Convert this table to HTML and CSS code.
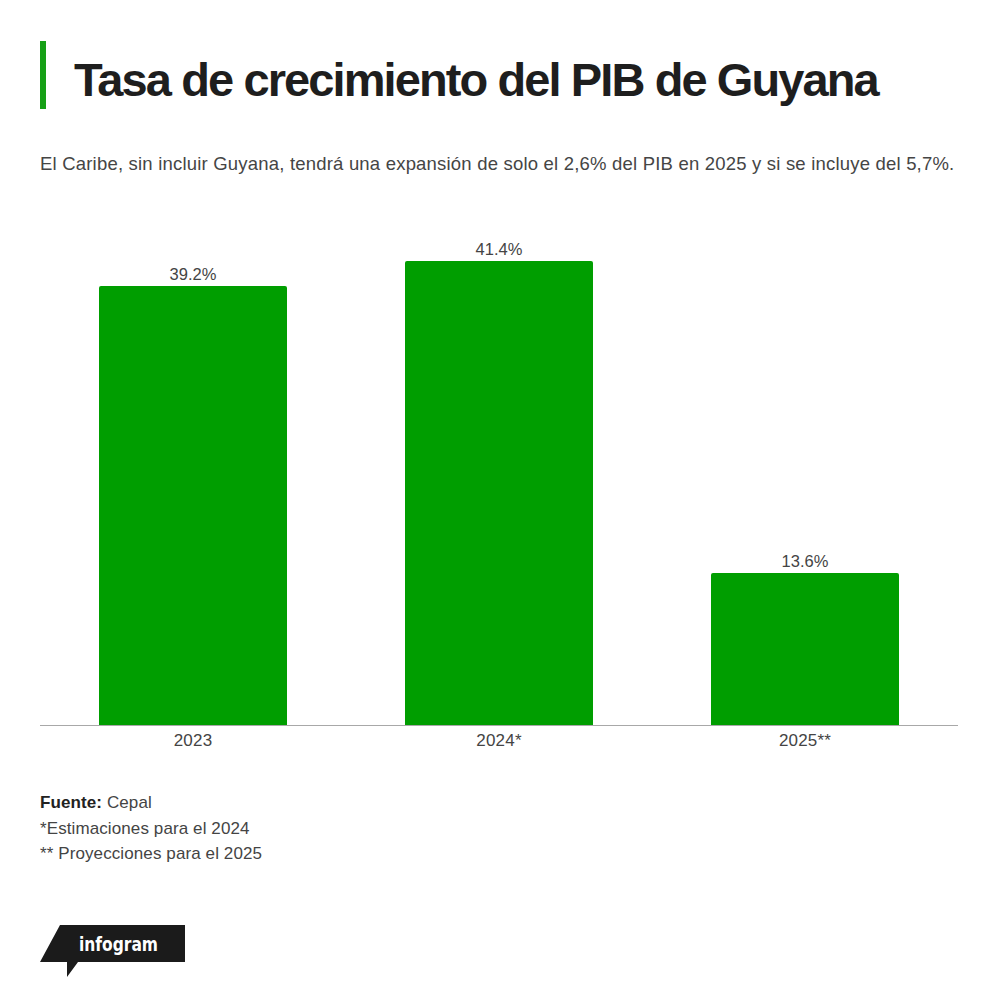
FILE: index.html
```html
<!DOCTYPE html>
<html lang="es">
<head>
<meta charset="utf-8">
<title>Tasa de crecimiento del PIB de Guyana</title>
<link rel="stylesheet" href="styles.css">
</head>
<body>
<div class="page">
  <header class="header">
    <div class="accent"></div>
    <h1 class="title">Tasa de crecimiento del PIB de Guyana</h1>
  </header>
  <p class="subtitle">El Caribe, sin incluir Guyana, tendrá una expansión de solo el 2,6% del PIB en 2025 y si se incluye del 5,7%.</p>

  <div class="chart">
    <div class="plot">
      <div class="col">
        <div class="value">39.2%</div>
        <div class="bar" style="height:439px"></div>
      </div>
      <div class="col">
        <div class="value">41.4%</div>
        <div class="bar" style="height:464px"></div>
      </div>
      <div class="col">
        <div class="value">13.6%</div>
        <div class="bar" style="height:152px"></div>
      </div>
    </div>
    <div class="xaxis">
      <div class="xlabel">2023</div>
      <div class="xlabel">2024*</div>
      <div class="xlabel">2025**</div>
    </div>
  </div>

  <div class="notes">
    <div class="note"><b class="strong">Fuente:</b> Cepal</div>
    <div class="note">*Estimaciones para el 2024</div>
    <div class="note">** Proyecciones para el 2025</div>
  </div>

  <div class="logo">
    <svg class="logo-svg" width="145" height="52" viewBox="0 0 145 52">
      <polygon points="20,0 145,0 145,37 38,37 27,52 27,37 0,37" fill="#1b1b1b"/>
      <text x="39" y="26" class="logo-text" textLength="79" lengthAdjust="spacingAndGlyphs">infogram</text>
    </svg>
  </div>
</div>
</body>
</html>
```

FILE: styles.css
```css
html, body {
  margin: 0;
  padding: 0;
  background: #ffffff;
}

body {
  font-family: "Liberation Sans", Arial, sans-serif;
  color: #444444;
}

.page {
  padding: 41px 42px 0 40px;
}

.header {
  display: flex;
  align-items: flex-start;
}

.accent {
  width: 6px;
  height: 68px;
  background: #16a016;
  flex: none;
}

.title {
  margin: 15px 0 0 28px;
  font-size: 47px;
  line-height: 48px;
  font-weight: 700;
  letter-spacing: -1.9px;
  color: #1e1e1e;
}

.subtitle {
  margin: 45px 0 0 0;
  font-size: 18.5px;
  line-height: 20px;
  letter-spacing: 0.2px;
  color: #454545;
}

.chart {
  margin-top: 26px;
}

.plot {
  height: 525px;
  display: flex;
  align-items: flex-end;
  border-bottom: 1px solid #a8a8a8;
}

.col {
  flex: 1;
  display: flex;
  flex-direction: column;
  align-items: center;
  justify-content: flex-end;
}

.value {
  font-size: 16.5px;
  line-height: 18px;
  margin-bottom: 3px;
  color: #444444;
}

.bar {
  width: 188px;
  background: #009e00;
  border-radius: 2px 2px 0 0;
}

.xaxis {
  display: flex;
  margin-top: 6px;
}

.xlabel {
  flex: 1;
  text-align: center;
  font-size: 17px;
  line-height: 18px;
  letter-spacing: 0.2px;
  color: #444444;
}

.notes {
  margin-top: 40px;
}

.note {
  font-size: 17px;
  line-height: 25.5px;
  letter-spacing: 0.1px;
  color: #444444;
}

.strong {
  font-weight: 700;
  color: #222222;
}

.logo {
  margin-top: 58px;
}

.logo-svg {
  display: block;
}

.logo-text {
  font-family: "DejaVu Sans Condensed", "DejaVu Sans", sans-serif;
  font-weight: 700;
  font-size: 19px;
  fill: #ffffff;
}
```
